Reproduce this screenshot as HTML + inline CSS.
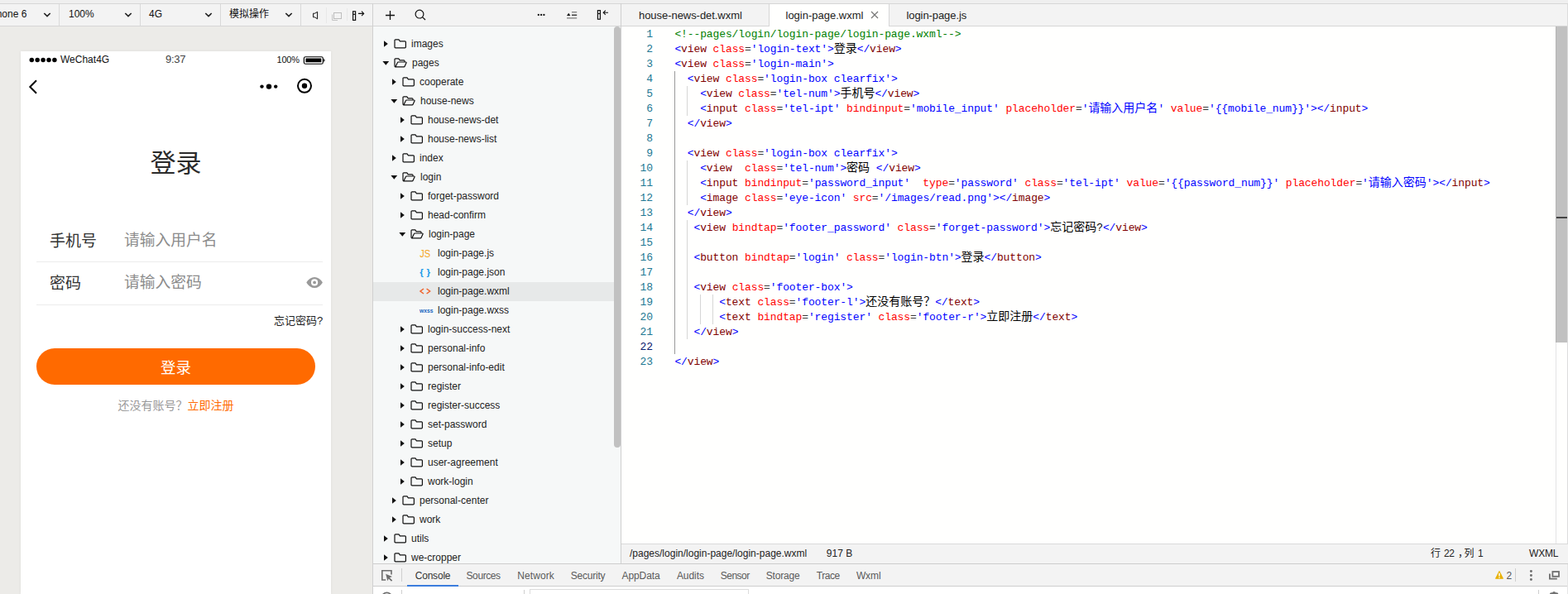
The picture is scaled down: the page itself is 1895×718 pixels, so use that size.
<!DOCTYPE html><html><head><meta charset="utf-8"><title>login-page.wxml</title><style>
*{box-sizing:border-box}
html,body{margin:0;padding:0}
body{width:1895px;height:718px;overflow:hidden;position:relative;background:#efefef;font-family:"Liberation Sans",sans-serif;font-size:12px;color:#222}
.a{position:absolute}
span.cj{display:inline-block;white-space:pre;overflow:visible;text-align:left;letter-spacing:0;font-family:"Liberation Sans","Noto Sans CJK SC",sans-serif}
svg.ic{position:absolute;overflow:visible}
.hl{position:absolute;height:1px}
.vl{position:absolute;width:1px}
.t{position:absolute;white-space:pre;line-height:1}
/* tree */
.row{position:absolute;left:451px;width:291px;height:23px}
.row .lb{position:absolute;top:5px;white-space:pre;line-height:14px;font-size:12px;color:#222}
/* code */
.ln{position:absolute;left:751px;width:38px;text-align:right;height:18px;line-height:18px;font-family:"Liberation Mono",monospace;font-size:13px;color:#237893;letter-spacing:-0.1px}
.cl{position:absolute;left:815.4px;height:18px;line-height:18px;font-family:"Liberation Mono",monospace;font-size:13px;letter-spacing:-0.112px;white-space:pre;color:#000}
.cl span.cj{vertical-align:baseline;font-family:"Liberation Mono","Noto Sans CJK SC",monospace}
.d{color:#0000ff}.g{color:#800000}.r{color:#ff0000}.e{color:#383838}.s{color:#0000ff}.c{color:#008000}.k{color:#000}
</style></head><body><div class="hl" style="left:0;top:4px;width:1895px;background:#d6d6d6"></div><div class="a" style="left:0;top:5px;width:450px;height:26px;background:#f3f3f3"></div><div class="hl" style="left:0;top:31px;width:450px;background:#d6d6d6"></div><div class="a" style="left:0;top:32px;width:450px;height:686px;background:#ecebe8"></div><div class="vl" style="left:450px;top:4px;height:714px;background:#d0d0d0"></div><div class="vl" style="left:71px;top:5px;height:26px;background:#d9d9d9"></div><div class="vl" style="left:169px;top:5px;height:26px;background:#d9d9d9"></div><div class="vl" style="left:266px;top:5px;height:26px;background:#d9d9d9"></div><div class="vl" style="left:363px;top:5px;height:26px;background:#d9d9d9"></div><div class="t" style="left:-15px;top:11px;font-size:12px;color:#111">iPhone 6</div><div class="t" style="left:83px;top:11px;font-size:12px;color:#111">100%</div><div class="t" style="left:180px;top:11px;font-size:12px;color:#111">4G</div><div class="a" style="left:277px;top:11px;line-height:0"><span class="cj" style="width:48px;height:12px;line-height:12px;font-size:12px;color:#111;">模拟操作</span></div><svg class="ic" style="left:52px;top:15px" width="10" height="6" viewBox="0 0 10 6"><path d="M1.3 1 L5 4.5 L8.7 1" fill="none" stroke="#222" stroke-width="1.7"/></svg><svg class="ic" style="left:150px;top:15px" width="10" height="6" viewBox="0 0 10 6"><path d="M1.3 1 L5 4.5 L8.7 1" fill="none" stroke="#222" stroke-width="1.7"/></svg><svg class="ic" style="left:247px;top:15px" width="10" height="6" viewBox="0 0 10 6"><path d="M1.3 1 L5 4.5 L8.7 1" fill="none" stroke="#222" stroke-width="1.7"/></svg><svg class="ic" style="left:344px;top:15px" width="10" height="6" viewBox="0 0 10 6"><path d="M1.3 1 L5 4.5 L8.7 1" fill="none" stroke="#222" stroke-width="1.7"/></svg><svg class="ic" style="left:376px;top:11px" width="12" height="15" viewBox="376 11 12 15"><path d="M378.6 16.2 H380.6 L383.6 14.3 V22.9 L380.6 20.8 H378.6 Z" fill="none" stroke="#111" stroke-width="1" stroke-linejoin="round"/></svg><div class="vl" style="left:394px;top:9px;height:19px;background:#e8e8e8"></div><svg class="ic" style="left:400px;top:13px" width="14" height="14" viewBox="400 13 14 14"><path d="M401.6 17.5 V24.5 H408" fill="none" stroke="#c4c4c4" stroke-width="1"/><rect x="403.5" y="15.5" width="9" height="7" fill="none" stroke="#bdbdbd" stroke-width="1"/></svg><div class="vl" style="left:419px;top:10px;height:15px;background:#e8e8e8"></div><svg class="ic" style="left:424px;top:11px" width="18" height="16" viewBox="424 11 18 16"><rect x="426.6" y="13.8" width="3" height="10.6" fill="none" stroke="#111" stroke-width="1.2"/><path d="M426.6 17.3 H429.6" stroke="#111" stroke-width="1.2"/><path d="M433 16.4 H439.5 M437 13.6 L439.7 16.4 L437 19.2" fill="none" stroke="#111" stroke-width="1.1"/></svg><div class="a" style="left:25px;top:62px;width:375px;height:656px;background:#fff;box-shadow:0 0 4px rgba(0,0,0,.06)"></div><svg class="ic" style="left:30px;top:66px" width="50" height="14" viewBox="30 66 50 14" fill="#000"><circle cx="38.3" cy="72.5" r="2.75"/><circle cx="45.2" cy="72.5" r="2.75"/><circle cx="52.1" cy="72.5" r="2.75"/><circle cx="59" cy="72.5" r="2.75"/><circle cx="65.9" cy="72.5" r="2.75"/></svg><div class="t" style="left:73px;top:66px;font-size:12px;color:#111">WeChat4G</div><div class="t" style="left:200px;top:65px;font-size:13px;color:#444;letter-spacing:-0.3px">9:37</div><div class="t" style="left:334.5px;top:67px;font-size:11px;color:#111;letter-spacing:-0.2px">100%</div><svg class="ic" style="left:365px;top:66px" width="30" height="14" viewBox="365 66 30 14"><rect x="367.4" y="68.7" width="22.9" height="8.5" rx="1.8" fill="none" stroke="#000" stroke-width="1.15"/><rect x="369.4" y="70.6" width="18.9" height="4.7" rx="0.5" fill="#000"/><path d="M391.6 71.4 Q392.9 72.9 391.6 74.4 Z" fill="#000" stroke="#000" stroke-width=".6"/></svg><svg class="ic" style="left:30px;top:92px" width="20" height="26" viewBox="30 92 20 26"><path d="M44 97.3 L36.3 105 L44 112.7" fill="none" stroke="#000" stroke-width="2"/></svg><svg class="ic" style="left:310px;top:92px" width="70" height="26" viewBox="310 92 70 26"><circle cx="316.5" cy="104.6" r="2.2"/><circle cx="325" cy="104.6" r="3.2"/><circle cx="333.2" cy="104.6" r="2.2"/><circle cx="368" cy="103.8" r="8" fill="none" stroke="#000" stroke-width="2"/><circle cx="368" cy="103.8" r="3.2"/></svg><div class="a" style="left:181.5px;top:182px;line-height:0"><span class="cj" style="width:62px;height:31px;line-height:31px;font-size:31px;color:#2b2b2b;">登录</span></div><div class="a" style="left:60px;top:281.5px;line-height:0"><span class="cj" style="width:57px;height:19px;line-height:19px;font-size:19px;color:#333;">手机号</span></div><div class="a" style="left:150px;top:281.5px;line-height:0"><span class="cj" style="width:112.5px;height:18.75px;line-height:18.75px;font-size:18.75px;color:#8c8c8c;">请输入用户名</span></div><div class="hl" style="left:44px;top:316px;width:346px;background:#ececec"></div><div class="a" style="left:60px;top:332.5px;line-height:0"><span class="cj" style="width:38px;height:19px;line-height:19px;font-size:19px;color:#333;">密码</span></div><div class="a" style="left:150px;top:332.5px;line-height:0"><span class="cj" style="width:93.75px;height:18.75px;line-height:18.75px;font-size:18.75px;color:#8c8c8c;">请输入密码</span></div><div class="hl" style="left:44px;top:368px;width:346px;background:#ececec"></div><svg class="ic" style="left:369px;top:332px" width="22" height="18" viewBox="369 332 22 18"><path d="M370.3 341.45 Q374.2 334.9 380.1 334.9 Q386 334.9 389.9 341.45 Q386 348 380.1 348 Q374.2 348 370.3 341.45 Z" fill="#999"/><circle cx="380.1" cy="341.45" r="4.1" fill="#fff"/><circle cx="380.1" cy="341.45" r="1.85" fill="#999"/></svg><div class="a" style="left:331px;top:381px;line-height:0"><span class="cj" style="width:58.162px;height:13px;line-height:13px;font-size:13px;color:#222;">忘记密码?</span></div><div class="a" style="left:43.5px;top:420.5px;width:337.5px;height:44px;border-radius:22px;background:#ff6a00"></div><div class="a" style="left:194px;top:435.5px;line-height:0"><span class="cj" style="width:37px;height:18.5px;line-height:18.5px;font-size:18.5px;color:#fff;">登录</span></div><div class="a" style="left:142.5px;top:483px;line-height:0;white-space:pre"><span class="cj" style="width:84px;height:14px;line-height:14px;font-size:14px;color:#999;">还没有账号？</span><span class="cj" style="width:56px;height:14px;line-height:14px;font-size:14px;color:#ff6a00;">立即注册</span></div><div class="a" style="left:451px;top:5px;width:299px;height:26px;background:#f3f3f3"></div><div class="hl" style="left:451px;top:31px;width:299px;background:#d6d6d6"></div><div class="a" style="left:451px;top:32px;width:299px;height:649px;background:#f6f8f8"></div><div class="vl" style="left:750px;top:4px;height:678px;background:#cfcfcf"></div><svg class="ic" style="left:460px;top:8px" width="290" height="22" viewBox="460 8 290 22" fill="none" stroke="#111"><path d="M471.5 13 V24 M466 18.5 H477" stroke-width="1.3"/><circle cx="507" cy="17.1" r="4.9" stroke-width="1.2"/><path d="M510.5 20.6 L514 24" stroke-width="1.3"/><g fill="#111" stroke="none"><rect x="649.8" y="16.9" width="2" height="2"/><rect x="653.1" y="16.9" width="2" height="2"/><rect x="656.4" y="16.9" width="2" height="2"/><path d="M685 19 L687.2 15.8 L689.4 19 Z"/></g><path d="M691 14.7 H697.2" stroke="#777" stroke-width="1.2"/><path d="M691 18.2 H697.2" stroke="#111" stroke-width="1.2"/><path d="M685 21.9 H697.2" stroke="#777" stroke-width="1.2"/><rect x="722.4" y="12.6" width="3" height="10.6" stroke-width="1.2"/><path d="M722.4 16.5 H725.4" stroke-width="1.2"/><path d="M729.3 15.3 H735 M731.8 12.7 L729.2 15.3 L731.8 17.9" stroke-width="1.1"/></svg><div class="a" style="left:742px;top:32px;width:8px;height:509px;background:#c1c1c1;border-radius:4px"></div><div class="t" style="left:497px;top:45.8px;font-size:12px;line-height:14px;color:#222">images</div><div class="t" style="left:498px;top:68.8px;font-size:12px;line-height:14px;color:#222">pages</div><div class="t" style="left:507px;top:91.8px;font-size:12px;line-height:14px;color:#222">cooperate</div><div class="t" style="left:508px;top:114.8px;font-size:12px;line-height:14px;color:#222">house-news</div><div class="t" style="left:517px;top:137.8px;font-size:12px;line-height:14px;color:#222">house-news-det</div><div class="t" style="left:517px;top:160.8px;font-size:12px;line-height:14px;color:#222">house-news-list</div><div class="t" style="left:507px;top:183.8px;font-size:12px;line-height:14px;color:#222">index</div><div class="t" style="left:508px;top:206.8px;font-size:12px;line-height:14px;color:#222">login</div><div class="t" style="left:517px;top:229.8px;font-size:12px;line-height:14px;color:#222">forget-password</div><div class="t" style="left:517px;top:252.8px;font-size:12px;line-height:14px;color:#222">head-confirm</div><div class="t" style="left:518px;top:275.8px;font-size:12px;line-height:14px;color:#222">login-page</div><div class="t" style="left:529px;top:298.8px;font-size:12px;line-height:14px;color:#222">login-page.js</div><div class="t" style="left:529px;top:321.8px;font-size:12px;line-height:14px;color:#222">login-page.json</div><div class="a" style="left:451px;top:340.5px;width:291px;height:23px;background:#e7e9e9"></div><div class="t" style="left:529px;top:344.8px;font-size:12px;line-height:14px;color:#222">login-page.wxml</div><div class="t" style="left:529px;top:367.8px;font-size:12px;line-height:14px;color:#222">login-page.wxss</div><div class="t" style="left:517px;top:390.8px;font-size:12px;line-height:14px;color:#222">login-success-next</div><div class="t" style="left:517px;top:413.8px;font-size:12px;line-height:14px;color:#222">personal-info</div><div class="t" style="left:517px;top:436.8px;font-size:12px;line-height:14px;color:#222">personal-info-edit</div><div class="t" style="left:517px;top:459.8px;font-size:12px;line-height:14px;color:#222">register</div><div class="t" style="left:517px;top:482.8px;font-size:12px;line-height:14px;color:#222">register-success</div><div class="t" style="left:517px;top:505.8px;font-size:12px;line-height:14px;color:#222">set-password</div><div class="t" style="left:517px;top:528.8px;font-size:12px;line-height:14px;color:#222">setup</div><div class="t" style="left:517px;top:551.8px;font-size:12px;line-height:14px;color:#222">user-agreement</div><div class="t" style="left:517px;top:574.8px;font-size:12px;line-height:14px;color:#222">work-login</div><div class="t" style="left:507px;top:597.8px;font-size:12px;line-height:14px;color:#222">personal-center</div><div class="t" style="left:507px;top:620.8px;font-size:12px;line-height:14px;color:#222">work</div><div class="t" style="left:497px;top:643.8px;font-size:12px;line-height:14px;color:#222">utils</div><div class="t" style="left:497px;top:666.8px;font-size:12px;line-height:14px;color:#222">we-cropper</div><svg class="ic" style="left:451px;top:32px" width="299" height="650" viewBox="451 32 299 650"><path d="M464 49.2 L468.8 53 L464 56.8 Z" fill="#111"/><g transform="translate(476.4 47.2)"><path d="M0.6 1.6 Q0.6 0.6 1.6 0.6 H5.6 L7 2.6 H13 Q14 2.6 14 3.6 V9.6 Q14 10.6 13 10.6 H1.6 Q0.6 10.6 0.6 9.6 Z" fill="none" stroke="#111" stroke-width="1.2" stroke-linejoin="round"/></g><path d="M462.4 74.1 L470.2 74.1 L466.3 78.7 Z" fill="#111"/><g transform="translate(476.4 70.2)"><path d="M1.8 10.6 Q0.6 10.6 0.6 9.4 V1.6 Q0.6 0.6 1.6 0.6 H5.4 L6.8 2.6 H11.6 Q12.6 2.6 12.6 3.6 V4.8" fill="none" stroke="#111" stroke-width="1.2" stroke-linejoin="round"/><path d="M1.6 10.6 L3.9 5.6 Q4.2 4.8 5.1 4.8 H14 Q15 4.8 14.6 5.7 L12.8 9.8 Q12.5 10.6 11.6 10.6 Z" fill="none" stroke="#111" stroke-width="1.2" stroke-linejoin="round"/></g><path d="M474 95.2 L478.8 99 L474 102.8 Z" fill="#111"/><g transform="translate(486.4 93.2)"><path d="M0.6 1.6 Q0.6 0.6 1.6 0.6 H5.6 L7 2.6 H13 Q14 2.6 14 3.6 V9.6 Q14 10.6 13 10.6 H1.6 Q0.6 10.6 0.6 9.6 Z" fill="none" stroke="#111" stroke-width="1.2" stroke-linejoin="round"/></g><path d="M472.4 120.1 L480.2 120.1 L476.3 124.7 Z" fill="#111"/><g transform="translate(486.4 116.2)"><path d="M1.8 10.6 Q0.6 10.6 0.6 9.4 V1.6 Q0.6 0.6 1.6 0.6 H5.4 L6.8 2.6 H11.6 Q12.6 2.6 12.6 3.6 V4.8" fill="none" stroke="#111" stroke-width="1.2" stroke-linejoin="round"/><path d="M1.6 10.6 L3.9 5.6 Q4.2 4.8 5.1 4.8 H14 Q15 4.8 14.6 5.7 L12.8 9.8 Q12.5 10.6 11.6 10.6 Z" fill="none" stroke="#111" stroke-width="1.2" stroke-linejoin="round"/></g><path d="M484 141.2 L488.8 145 L484 148.8 Z" fill="#111"/><g transform="translate(496.4 139.2)"><path d="M0.6 1.6 Q0.6 0.6 1.6 0.6 H5.6 L7 2.6 H13 Q14 2.6 14 3.6 V9.6 Q14 10.6 13 10.6 H1.6 Q0.6 10.6 0.6 9.6 Z" fill="none" stroke="#111" stroke-width="1.2" stroke-linejoin="round"/></g><path d="M484 164.2 L488.8 168 L484 171.8 Z" fill="#111"/><g transform="translate(496.4 162.2)"><path d="M0.6 1.6 Q0.6 0.6 1.6 0.6 H5.6 L7 2.6 H13 Q14 2.6 14 3.6 V9.6 Q14 10.6 13 10.6 H1.6 Q0.6 10.6 0.6 9.6 Z" fill="none" stroke="#111" stroke-width="1.2" stroke-linejoin="round"/></g><path d="M474 187.2 L478.8 191 L474 194.8 Z" fill="#111"/><g transform="translate(486.4 185.2)"><path d="M0.6 1.6 Q0.6 0.6 1.6 0.6 H5.6 L7 2.6 H13 Q14 2.6 14 3.6 V9.6 Q14 10.6 13 10.6 H1.6 Q0.6 10.6 0.6 9.6 Z" fill="none" stroke="#111" stroke-width="1.2" stroke-linejoin="round"/></g><path d="M472.4 212.1 L480.2 212.1 L476.3 216.7 Z" fill="#111"/><g transform="translate(486.4 208.2)"><path d="M1.8 10.6 Q0.6 10.6 0.6 9.4 V1.6 Q0.6 0.6 1.6 0.6 H5.4 L6.8 2.6 H11.6 Q12.6 2.6 12.6 3.6 V4.8" fill="none" stroke="#111" stroke-width="1.2" stroke-linejoin="round"/><path d="M1.6 10.6 L3.9 5.6 Q4.2 4.8 5.1 4.8 H14 Q15 4.8 14.6 5.7 L12.8 9.8 Q12.5 10.6 11.6 10.6 Z" fill="none" stroke="#111" stroke-width="1.2" stroke-linejoin="round"/></g><path d="M484 233.2 L488.8 237 L484 240.8 Z" fill="#111"/><g transform="translate(496.4 231.2)"><path d="M0.6 1.6 Q0.6 0.6 1.6 0.6 H5.6 L7 2.6 H13 Q14 2.6 14 3.6 V9.6 Q14 10.6 13 10.6 H1.6 Q0.6 10.6 0.6 9.6 Z" fill="none" stroke="#111" stroke-width="1.2" stroke-linejoin="round"/></g><path d="M484 256.2 L488.8 260 L484 263.8 Z" fill="#111"/><g transform="translate(496.4 254.2)"><path d="M0.6 1.6 Q0.6 0.6 1.6 0.6 H5.6 L7 2.6 H13 Q14 2.6 14 3.6 V9.6 Q14 10.6 13 10.6 H1.6 Q0.6 10.6 0.6 9.6 Z" fill="none" stroke="#111" stroke-width="1.2" stroke-linejoin="round"/></g><path d="M482.4 281.1 L490.2 281.1 L486.3 285.7 Z" fill="#111"/><g transform="translate(496.4 277.2)"><path d="M1.8 10.6 Q0.6 10.6 0.6 9.4 V1.6 Q0.6 0.6 1.6 0.6 H5.4 L6.8 2.6 H11.6 Q12.6 2.6 12.6 3.6 V4.8" fill="none" stroke="#111" stroke-width="1.2" stroke-linejoin="round"/><path d="M1.6 10.6 L3.9 5.6 Q4.2 4.8 5.1 4.8 H14 Q15 4.8 14.6 5.7 L12.8 9.8 Q12.5 10.6 11.6 10.6 Z" fill="none" stroke="#111" stroke-width="1.2" stroke-linejoin="round"/></g><text x="507.3" y="310.6" font-family="Liberation Sans" font-size="12.5" fill="#f5a623" textLength="13" lengthAdjust="spacingAndGlyphs">JS</text><text x="507.3" y="332.6" font-family="Liberation Sans" font-weight="bold" font-size="11.5" fill="#1e9be9" textLength="12.6">{ }</text><path d="M512 349 L508 352 L512 355 M515.6 349 L519.6 352 L515.6 355" fill="none" stroke="#f0642d" stroke-width="1.5"/><text x="507" y="377.6" font-family="Liberation Sans" font-weight="bold" font-size="7.5" fill="#1565c0" textLength="16.4" lengthAdjust="spacingAndGlyphs">wxss</text><path d="M484 394.2 L488.8 398 L484 401.8 Z" fill="#111"/><g transform="translate(496.4 392.2)"><path d="M0.6 1.6 Q0.6 0.6 1.6 0.6 H5.6 L7 2.6 H13 Q14 2.6 14 3.6 V9.6 Q14 10.6 13 10.6 H1.6 Q0.6 10.6 0.6 9.6 Z" fill="none" stroke="#111" stroke-width="1.2" stroke-linejoin="round"/></g><path d="M484 417.2 L488.8 421 L484 424.8 Z" fill="#111"/><g transform="translate(496.4 415.2)"><path d="M0.6 1.6 Q0.6 0.6 1.6 0.6 H5.6 L7 2.6 H13 Q14 2.6 14 3.6 V9.6 Q14 10.6 13 10.6 H1.6 Q0.6 10.6 0.6 9.6 Z" fill="none" stroke="#111" stroke-width="1.2" stroke-linejoin="round"/></g><path d="M484 440.2 L488.8 444 L484 447.8 Z" fill="#111"/><g transform="translate(496.4 438.2)"><path d="M0.6 1.6 Q0.6 0.6 1.6 0.6 H5.6 L7 2.6 H13 Q14 2.6 14 3.6 V9.6 Q14 10.6 13 10.6 H1.6 Q0.6 10.6 0.6 9.6 Z" fill="none" stroke="#111" stroke-width="1.2" stroke-linejoin="round"/></g><path d="M484 463.2 L488.8 467 L484 470.8 Z" fill="#111"/><g transform="translate(496.4 461.2)"><path d="M0.6 1.6 Q0.6 0.6 1.6 0.6 H5.6 L7 2.6 H13 Q14 2.6 14 3.6 V9.6 Q14 10.6 13 10.6 H1.6 Q0.6 10.6 0.6 9.6 Z" fill="none" stroke="#111" stroke-width="1.2" stroke-linejoin="round"/></g><path d="M484 486.2 L488.8 490 L484 493.8 Z" fill="#111"/><g transform="translate(496.4 484.2)"><path d="M0.6 1.6 Q0.6 0.6 1.6 0.6 H5.6 L7 2.6 H13 Q14 2.6 14 3.6 V9.6 Q14 10.6 13 10.6 H1.6 Q0.6 10.6 0.6 9.6 Z" fill="none" stroke="#111" stroke-width="1.2" stroke-linejoin="round"/></g><path d="M484 509.2 L488.8 513 L484 516.8 Z" fill="#111"/><g transform="translate(496.4 507.2)"><path d="M0.6 1.6 Q0.6 0.6 1.6 0.6 H5.6 L7 2.6 H13 Q14 2.6 14 3.6 V9.6 Q14 10.6 13 10.6 H1.6 Q0.6 10.6 0.6 9.6 Z" fill="none" stroke="#111" stroke-width="1.2" stroke-linejoin="round"/></g><path d="M484 532.2 L488.8 536 L484 539.8 Z" fill="#111"/><g transform="translate(496.4 530.2)"><path d="M0.6 1.6 Q0.6 0.6 1.6 0.6 H5.6 L7 2.6 H13 Q14 2.6 14 3.6 V9.6 Q14 10.6 13 10.6 H1.6 Q0.6 10.6 0.6 9.6 Z" fill="none" stroke="#111" stroke-width="1.2" stroke-linejoin="round"/></g><path d="M484 555.2 L488.8 559 L484 562.8 Z" fill="#111"/><g transform="translate(496.4 553.2)"><path d="M0.6 1.6 Q0.6 0.6 1.6 0.6 H5.6 L7 2.6 H13 Q14 2.6 14 3.6 V9.6 Q14 10.6 13 10.6 H1.6 Q0.6 10.6 0.6 9.6 Z" fill="none" stroke="#111" stroke-width="1.2" stroke-linejoin="round"/></g><path d="M484 578.2 L488.8 582 L484 585.8 Z" fill="#111"/><g transform="translate(496.4 576.2)"><path d="M0.6 1.6 Q0.6 0.6 1.6 0.6 H5.6 L7 2.6 H13 Q14 2.6 14 3.6 V9.6 Q14 10.6 13 10.6 H1.6 Q0.6 10.6 0.6 9.6 Z" fill="none" stroke="#111" stroke-width="1.2" stroke-linejoin="round"/></g><path d="M474 601.2 L478.8 605 L474 608.8 Z" fill="#111"/><g transform="translate(486.4 599.2)"><path d="M0.6 1.6 Q0.6 0.6 1.6 0.6 H5.6 L7 2.6 H13 Q14 2.6 14 3.6 V9.6 Q14 10.6 13 10.6 H1.6 Q0.6 10.6 0.6 9.6 Z" fill="none" stroke="#111" stroke-width="1.2" stroke-linejoin="round"/></g><path d="M474 624.2 L478.8 628 L474 631.8 Z" fill="#111"/><g transform="translate(486.4 622.2)"><path d="M0.6 1.6 Q0.6 0.6 1.6 0.6 H5.6 L7 2.6 H13 Q14 2.6 14 3.6 V9.6 Q14 10.6 13 10.6 H1.6 Q0.6 10.6 0.6 9.6 Z" fill="none" stroke="#111" stroke-width="1.2" stroke-linejoin="round"/></g><path d="M464 647.2 L468.8 651 L464 654.8 Z" fill="#111"/><g transform="translate(476.4 645.2)"><path d="M0.6 1.6 Q0.6 0.6 1.6 0.6 H5.6 L7 2.6 H13 Q14 2.6 14 3.6 V9.6 Q14 10.6 13 10.6 H1.6 Q0.6 10.6 0.6 9.6 Z" fill="none" stroke="#111" stroke-width="1.2" stroke-linejoin="round"/></g><path d="M464 670.2 L468.8 674 L464 677.8 Z" fill="#111"/><g transform="translate(476.4 668.2)"><path d="M0.6 1.6 Q0.6 0.6 1.6 0.6 H5.6 L7 2.6 H13 Q14 2.6 14 3.6 V9.6 Q14 10.6 13 10.6 H1.6 Q0.6 10.6 0.6 9.6 Z" fill="none" stroke="#111" stroke-width="1.2" stroke-linejoin="round"/></g></svg><div class="a" style="left:751px;top:5px;width:1144px;height:26px;background:#f3f3f3"></div><div class="hl" style="left:751px;top:31px;width:1144px;background:#d6d6d6"></div><div class="a" style="left:930px;top:5px;width:144px;height:27px;background:#fffffe"></div><div class="vl" style="left:929px;top:5px;height:27px;background:#d6d6d6"></div><div class="vl" style="left:1074px;top:5px;height:27px;background:#d6d6d6"></div><div class="t" style="left:772px;top:11.5px;font-size:13px;color:#222;letter-spacing:-0.05px">house-news-det.wxml</div><div class="t" style="left:949.5px;top:11.5px;font-size:13px;color:#222">login-page.wxml</div><div class="t" style="left:1095.5px;top:11.5px;font-size:13px;color:#222;letter-spacing:-0.08px">login-page.js</div><svg class="ic" style="left:1051px;top:12px" width="12" height="12" viewBox="0 0 12 12"><path d="M2 2 L10 10 M10 2 L2 10" stroke="#777" stroke-width="1.2" fill="none"/></svg><div class="a" style="left:751px;top:32px;width:1144px;height:625px;background:#fffffe"></div><div class="vl" style="left:1880px;top:32px;height:625px;background:#e4e4e4"></div><div class="vl" style="left:1894px;top:5px;height:676px;background:#dcdcdc"></div><div class="a" style="left:1880px;top:32px;width:14px;height:382px;background:#c1c1c1;border-left:1px solid #b3b3b3"></div><div class="a" style="left:1881px;top:262px;width:13px;height:2px;background:#444"></div><div class="vl" style="left:815px;top:86px;height:342px;background:#9a9a9a"></div><div class="vl" style="left:830px;top:104px;height:36px;background:#d6d6d6"></div><div class="vl" style="left:830px;top:194px;height:54px;background:#d6d6d6"></div><div class="vl" style="left:830px;top:266px;height:144px;background:#d6d6d6"></div><div class="vl" style="left:846px;top:356px;height:36px;background:#d6d6d6"></div><div class="vl" style="left:861px;top:356px;height:36px;background:#d6d6d6"></div><div class="ln" style="top:33px">1</div><div class="cl" style="top:33px"><span class="c">&lt;!--pages/login/login-page/login-page.wxml--&gt;</span></div><div class="ln" style="top:51px">2</div><div class="cl" style="top:51px"><span class="d">&lt;</span><span class="g">view</span> <span class="r">class</span><span class="e">=</span><span class="s">'login-text'</span><span class="d">&gt;</span><span class="cj" style="width:28px;height:14px;line-height:14px;font-size:14px;color:#000;">登录</span><span class="d">&lt;/</span><span class="g">view</span><span class="d">&gt;</span></div><div class="ln" style="top:69px">3</div><div class="cl" style="top:69px"><span class="d">&lt;</span><span class="g">view</span> <span class="r">class</span><span class="e">=</span><span class="s">'login-main'</span><span class="d">&gt;</span></div><div class="ln" style="top:87px">4</div><div class="cl" style="top:87px"><span class="k">  </span><span class="d">&lt;</span><span class="g">view</span> <span class="r">class</span><span class="e">=</span><span class="s">'login-box clearfix'</span><span class="d">&gt;</span></div><div class="ln" style="top:105px">5</div><div class="cl" style="top:105px"><span class="k">    </span><span class="d">&lt;</span><span class="g">view</span> <span class="r">class</span><span class="e">=</span><span class="s">'tel-num'</span><span class="d">&gt;</span><span class="cj" style="width:42px;height:14px;line-height:14px;font-size:14px;color:#000;">手机号</span><span class="d">&lt;/</span><span class="g">view</span><span class="d">&gt;</span></div><div class="ln" style="top:123px">6</div><div class="cl" style="top:123px"><span class="k">    </span><span class="d">&lt;</span><span class="g">input</span> <span class="r">class</span><span class="e">=</span><span class="s">'tel-ipt'</span> <span class="r">bindinput</span><span class="e">=</span><span class="s">'mobile_input'</span> <span class="r">placeholder</span><span class="e">=</span><span class="s">'</span><span class="cj" style="width:84px;height:14px;line-height:14px;font-size:14px;color:#0000ff;">请输入用户名</span><span class="s">'</span> <span class="r">value</span><span class="e">=</span><span class="s">'{{mobile_num}}'</span><span class="d">&gt;</span><span class="d">&lt;/</span><span class="g">input</span><span class="d">&gt;</span></div><div class="ln" style="top:141px">7</div><div class="cl" style="top:141px"><span class="k">  </span><span class="d">&lt;/</span><span class="g">view</span><span class="d">&gt;</span></div><div class="ln" style="top:159px">8</div><div class="ln" style="top:177px">9</div><div class="cl" style="top:177px"><span class="k">  </span><span class="d">&lt;</span><span class="g">view</span> <span class="r">class</span><span class="e">=</span><span class="s">'login-box clearfix'</span><span class="d">&gt;</span></div><div class="ln" style="top:195px">10</div><div class="cl" style="top:195px"><span class="k">    </span><span class="d">&lt;</span><span class="g">view</span>  <span class="r">class</span><span class="e">=</span><span class="s">'tel-num'</span><span class="d">&gt;</span><span class="cj" style="width:28px;height:14px;line-height:14px;font-size:14px;color:#000;">密码</span><span class="k"> </span><span class="d">&lt;/</span><span class="g">view</span><span class="d">&gt;</span></div><div class="ln" style="top:213px">11</div><div class="cl" style="top:213px"><span class="k">    </span><span class="d">&lt;</span><span class="g">input</span> <span class="r">bindinput</span><span class="e">=</span><span class="s">'password_input'</span>  <span class="r">type</span><span class="e">=</span><span class="s">'password'</span> <span class="r">class</span><span class="e">=</span><span class="s">'tel-ipt'</span> <span class="r">value</span><span class="e">=</span><span class="s">'{{password_num}}'</span> <span class="r">placeholder</span><span class="e">=</span><span class="s">'</span><span class="cj" style="width:70px;height:14px;line-height:14px;font-size:14px;color:#0000ff;">请输入密码</span><span class="s">'</span><span class="d">&gt;</span><span class="d">&lt;/</span><span class="g">input</span><span class="d">&gt;</span></div><div class="ln" style="top:231px">12</div><div class="cl" style="top:231px"><span class="k">    </span><span class="d">&lt;</span><span class="g">image</span> <span class="r">class</span><span class="e">=</span><span class="s">'eye-icon'</span> <span class="r">src</span><span class="e">=</span><span class="s">'/images/read.png'</span><span class="d">&gt;</span><span class="d">&lt;/</span><span class="g">image</span><span class="d">&gt;</span></div><div class="ln" style="top:249px">13</div><div class="cl" style="top:249px"><span class="k">  </span><span class="d">&lt;/</span><span class="g">view</span><span class="d">&gt;</span></div><div class="ln" style="top:267px">14</div><div class="cl" style="top:267px"><span class="k">   </span><span class="d">&lt;</span><span class="g">view</span> <span class="r">bindtap</span><span class="e">=</span><span class="s">'footer_password'</span> <span class="r">class</span><span class="e">=</span><span class="s">'forget-password'</span><span class="d">&gt;</span><span class="cj" style="width:56px;height:14px;line-height:14px;font-size:14px;color:#000;">忘记密码</span><span class="k">?</span><span class="d">&lt;/</span><span class="g">view</span><span class="d">&gt;</span></div><div class="ln" style="top:285px">15</div><div class="ln" style="top:303px">16</div><div class="cl" style="top:303px"><span class="k">   </span><span class="d">&lt;</span><span class="g">button</span> <span class="r">bindtap</span><span class="e">=</span><span class="s">'login'</span> <span class="r">class</span><span class="e">=</span><span class="s">'login-btn'</span><span class="d">&gt;</span><span class="cj" style="width:28px;height:14px;line-height:14px;font-size:14px;color:#000;">登录</span><span class="d">&lt;/</span><span class="g">button</span><span class="d">&gt;</span></div><div class="ln" style="top:321px">17</div><div class="ln" style="top:339px">18</div><div class="cl" style="top:339px"><span class="k">   </span><span class="d">&lt;</span><span class="g">view</span> <span class="r">class</span><span class="e">=</span><span class="s">'footer-box'</span><span class="d">&gt;</span></div><div class="ln" style="top:357px">19</div><div class="cl" style="top:357px"><span class="k">       </span><span class="d">&lt;</span><span class="g">text</span> <span class="r">class</span><span class="e">=</span><span class="s">'footer-l'</span><span class="d">&gt;</span><span class="cj" style="width:84px;height:14px;line-height:14px;font-size:14px;color:#000;">还没有账号？</span><span class="d">&lt;/</span><span class="g">text</span><span class="d">&gt;</span></div><div class="ln" style="top:375px">20</div><div class="cl" style="top:375px"><span class="k">       </span><span class="d">&lt;</span><span class="g">text</span> <span class="r">bindtap</span><span class="e">=</span><span class="s">'register'</span> <span class="r">class</span><span class="e">=</span><span class="s">'footer-r'</span><span class="d">&gt;</span><span class="cj" style="width:56px;height:14px;line-height:14px;font-size:14px;color:#000;">立即注册</span><span class="d">&lt;/</span><span class="g">text</span><span class="d">&gt;</span></div><div class="ln" style="top:393px">21</div><div class="cl" style="top:393px"><span class="k">   </span><span class="d">&lt;/</span><span class="g">view</span><span class="d">&gt;</span></div><div class="ln" style="top:411px;color:#0b216f">22</div><div class="ln" style="top:429px">23</div><div class="cl" style="top:429px"><span class="d">&lt;/</span><span class="g">view</span><span class="d">&gt;</span></div><div class="hl" style="left:751px;top:657px;width:1144px;background:#dadada"></div><div class="a" style="left:751px;top:658px;width:1144px;height:23px;background:#f3f3f3"></div><div class="t" style="left:761px;top:663px;font-size:12px;color:#222">/pages/login/login-page/login-page.wxml</div><div class="t" style="left:998.8px;top:663px;font-size:12px;color:#222">917 B</div><div class="a" style="left:1729px;top:663px;line-height:0"><span class="cj" style="width:12px;height:12px;line-height:12px;font-size:12px;color:#222;">行</span></div><div class="t" style="left:1745px;top:663px;font-size:12px;color:#222;letter-spacing:-0.4px">22</div><div class="a" style="left:1762px;top:663px;line-height:0"><span class="cj" style="width:12px;height:12px;line-height:12px;font-size:12px;color:#222;">，</span></div><div class="a" style="left:1769.5px;top:663px;line-height:0"><span class="cj" style="width:12px;height:12px;line-height:12px;font-size:12px;color:#222;">列</span></div><div class="t" style="left:1786px;top:663px;font-size:12px;color:#222">1</div><div class="t" style="left:1848px;top:663px;font-size:12px;color:#222;letter-spacing:-0.2px">WXML</div><div class="hl" style="left:451px;top:681px;width:1444px;background:#cdcdcd"></div><div class="a" style="left:451px;top:682px;width:1444px;height:26px;background:#f3f3f3"></div><div class="hl" style="left:451px;top:708px;width:1444px;background:#cdcdcd"></div><div class="a" style="left:451px;top:709px;width:1444px;height:9px;background:#fff"></div><div class="t" style="left:501.7px;top:689.5px;font-size:12px;color:#333;letter-spacing:-0.20px">Console</div><div class="t" style="left:563.5px;top:689.5px;font-size:12px;color:#5a5a5a;letter-spacing:-0.40px">Sources</div><div class="t" style="left:625.2px;top:689.5px;font-size:12px;color:#5a5a5a;letter-spacing:0.11px">Network</div><div class="t" style="left:689.7px;top:689.5px;font-size:12px;color:#5a5a5a;letter-spacing:-0.21px">Security</div><div class="t" style="left:751.5px;top:689.5px;font-size:12px;color:#5a5a5a;letter-spacing:-0.09px">AppData</div><div class="t" style="left:817.9px;top:689.5px;font-size:12px;color:#5a5a5a;letter-spacing:-0.04px">Audits</div><div class="t" style="left:870.8px;top:689.5px;font-size:12px;color:#5a5a5a;letter-spacing:-0.52px">Sensor</div><div class="t" style="left:925.8px;top:689.5px;font-size:12px;color:#5a5a5a;letter-spacing:-0.18px">Storage</div><div class="t" style="left:986.8px;top:689.5px;font-size:12px;color:#5a5a5a;letter-spacing:-0.47px">Trace</div><div class="t" style="left:1034.9px;top:689.5px;font-size:12px;color:#5a5a5a;letter-spacing:-0.10px">Wxml</div><div class="a" style="left:492px;top:707px;width:62px;height:2px;background:#3b7ddd"></div><svg class="ic" style="left:455px;top:684px" width="40" height="24" viewBox="455 684 40 24"><path d="M466.2 701 H461.8 V689.8 H473 V694.6" fill="none" stroke="#6e6e6e" stroke-width="1.6"/><path d="M466.2 693.8 L474 697 L470.9 698.2 L474.2 701.5 L473 702.7 L469.7 699.4 L468.4 702.2 Z" fill="#6e6e6e"/></svg><div class="vl" style="left:485px;top:687px;height:16px;background:#cfcfcf"></div><svg class="ic" style="left:1800px;top:684px" width="95" height="24" viewBox="1800 684 95 24"><path d="M1812 690.4 L1816.5 699.3 H1807.5 Z" fill="#e8b000" stroke="#e8b000" stroke-width="0.9" stroke-linejoin="round"/><path d="M1812 692.8 V696.6 M1812 697.6 V698.8" stroke="#fff" stroke-width="1.5"/><circle cx="1850.4" cy="690.5" r="1.45" fill="#6e6e6e"/><circle cx="1850.4" cy="695.5" r="1.45" fill="#6e6e6e"/><circle cx="1850.4" cy="700.5" r="1.45" fill="#6e6e6e"/><rect x="1876.4" y="691" width="7.6" height="5.8" fill="none" stroke="#6e6e6e" stroke-width="1.8"/><path d="M1872.9 693.4 V699.7 H1881.8" fill="none" stroke="#6e6e6e" stroke-width="1.8"/></svg><div class="t" style="left:1820.5px;top:689.5px;font-size:12px;color:#555;letter-spacing:0">2</div><div class="vl" style="left:1831px;top:687px;height:16px;background:#cfcfcf"></div><div class="vl" style="left:485px;top:713px;height:5px;background:#cfcfcf"></div><div class="vl" style="left:633px;top:713px;height:5px;background:#cfcfcf"></div><div class="a" style="left:640px;top:712px;width:265px;height:10px;border:1px solid #dcdcdc;background:#fff"></div><div class="vl" style="left:1859px;top:713px;height:5px;background:#cfcfcf"></div><svg class="ic" style="left:455px;top:709px" width="30" height="9" viewBox="455 709 30 9"><circle cx="467.5" cy="722.3" r="6" fill="none" stroke="#6e6e6e" stroke-width="1.7"/></svg><svg class="ic" style="left:1865px;top:709px" width="30" height="9" viewBox="1865 709 30 9"><path d="M1876.6 719 V715.2 H1879.6 V719 Z M1872.4 719 L1873.4 716.8 L1875 716.3 H1881.2 L1882.8 716.8 L1883.8 719 Z" fill="#6e6e6e"/></svg><div class="vl" style="left:1894px;top:682px;height:36px;background:#e6e6e6"></div></body></html>
